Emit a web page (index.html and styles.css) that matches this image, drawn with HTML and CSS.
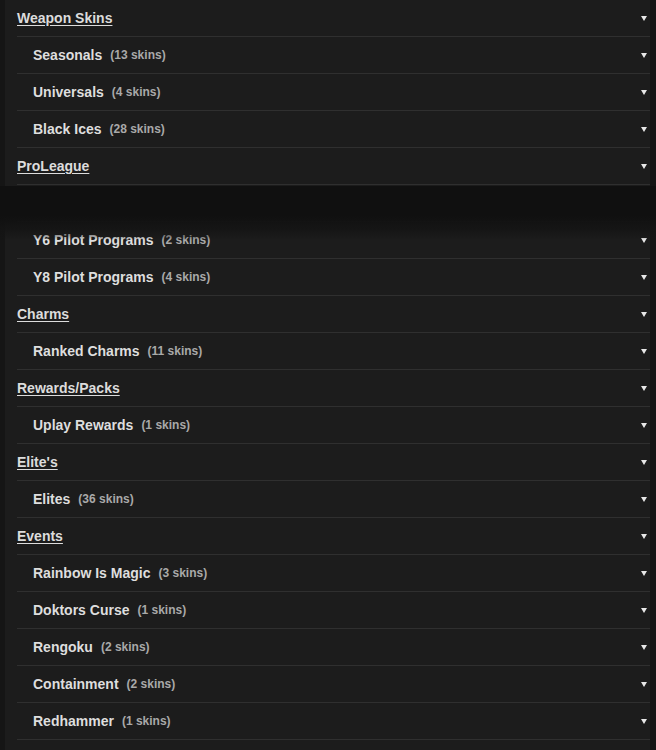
FILE: index.html
```html
<!DOCTYPE html>
<html>
<head>
<meta charset="utf-8">
<link rel="stylesheet" href="styles.css">
</head>
<body>
<div class="page">
  <ul class="list">
    <li class="row top"><a class="title" href="#">Weapon Skins</a><span class="arrow"></span></li>
    <li class="row sub"><span class="name">Seasonals</span><span class="count">(13 skins)</span><span class="arrow"></span></li>
    <li class="row sub"><span class="name">Universals</span><span class="count">(4 skins)</span><span class="arrow"></span></li>
    <li class="row sub"><span class="name">Black Ices</span><span class="count">(28 skins)</span><span class="arrow"></span></li>
    <li class="row top"><a class="title" href="#">ProLeague</a><span class="arrow"></span></li>
    <li class="row sub"><span class="name">Y5 Pilot Programs</span><span class="count">(3 skins)</span><span class="arrow"></span></li>
    <li class="row sub"><span class="name">Y6 Pilot Programs</span><span class="count">(2 skins)</span><span class="arrow"></span></li>
    <li class="row sub"><span class="name">Y8 Pilot Programs</span><span class="count">(4 skins)</span><span class="arrow"></span></li>
    <li class="row top"><a class="title" href="#">Charms</a><span class="arrow"></span></li>
    <li class="row sub"><span class="name">Ranked Charms</span><span class="count">(11 skins)</span><span class="arrow"></span></li>
    <li class="row top"><a class="title" href="#">Rewards/Packs</a><span class="arrow"></span></li>
    <li class="row sub"><span class="name">Uplay Rewards</span><span class="count">(1 skins)</span><span class="arrow"></span></li>
    <li class="row top"><a class="title" href="#">Elite's</a><span class="arrow"></span></li>
    <li class="row sub"><span class="name">Elites</span><span class="count">(36 skins)</span><span class="arrow"></span></li>
    <li class="row top"><a class="title" href="#">Events</a><span class="arrow"></span></li>
    <li class="row sub"><span class="name">Rainbow Is Magic</span><span class="count">(3 skins)</span><span class="arrow"></span></li>
    <li class="row sub"><span class="name">Doktors Curse</span><span class="count">(1 skins)</span><span class="arrow"></span></li>
    <li class="row sub"><span class="name">Rengoku</span><span class="count">(2 skins)</span><span class="arrow"></span></li>
    <li class="row sub"><span class="name">Containment</span><span class="count">(2 skins)</span><span class="arrow"></span></li>
    <li class="row sub"><span class="name">Redhammer</span><span class="count">(1 skins)</span><span class="arrow"></span></li>
  </ul>
  <div class="shade"></div>
</div>
</body>
</html>
```
FILE: styles.css
```css
html, body {
  margin: 0;
  padding: 0;
  background: #151515;
  height: 750px;
  overflow: hidden;
}
.page {
  position: relative;
  margin: 0 6px 0 5px;
  background: #1c1c1c;
  height: 750px;
  font-family: "Liberation Sans", Arial, sans-serif;
}
.list {
  list-style: none;
  margin: 0;
  padding: 0 0 0 12px;
}
.row {
  display: flex;
  align-items: center;
  height: 36px;
  border-bottom: 1px solid #2f2f2f;
}
.row.sub {
  padding-left: 16px;
}
.title {
  color: #dcdcdc;
  font-weight: bold;
  font-size: 14px;
  text-decoration: underline;
  text-underline-offset: 2px;
}
.name {
  color: #dedede;
  font-weight: bold;
  font-size: 14px;
}
.count {
  color: #a9a9a9;
  font-weight: bold;
  font-size: 12px;
  margin-left: 8px;
}
.arrow {
  margin-left: auto;
  margin-right: 3px;
  width: 0;
  height: 0;
  border-left: 3px solid transparent;
  border-right: 3px solid transparent;
  border-top: 5px solid #e8e8e8;
}
.shade {
  position: absolute;
  left: -5px;
  right: -6px;
  top: 186px;
  height: 54px;
  background: linear-gradient(to bottom, #101010 0%, #101010 55%, rgba(20,20,20,0.85) 80%, rgba(28,28,28,0) 100%);
}
```
